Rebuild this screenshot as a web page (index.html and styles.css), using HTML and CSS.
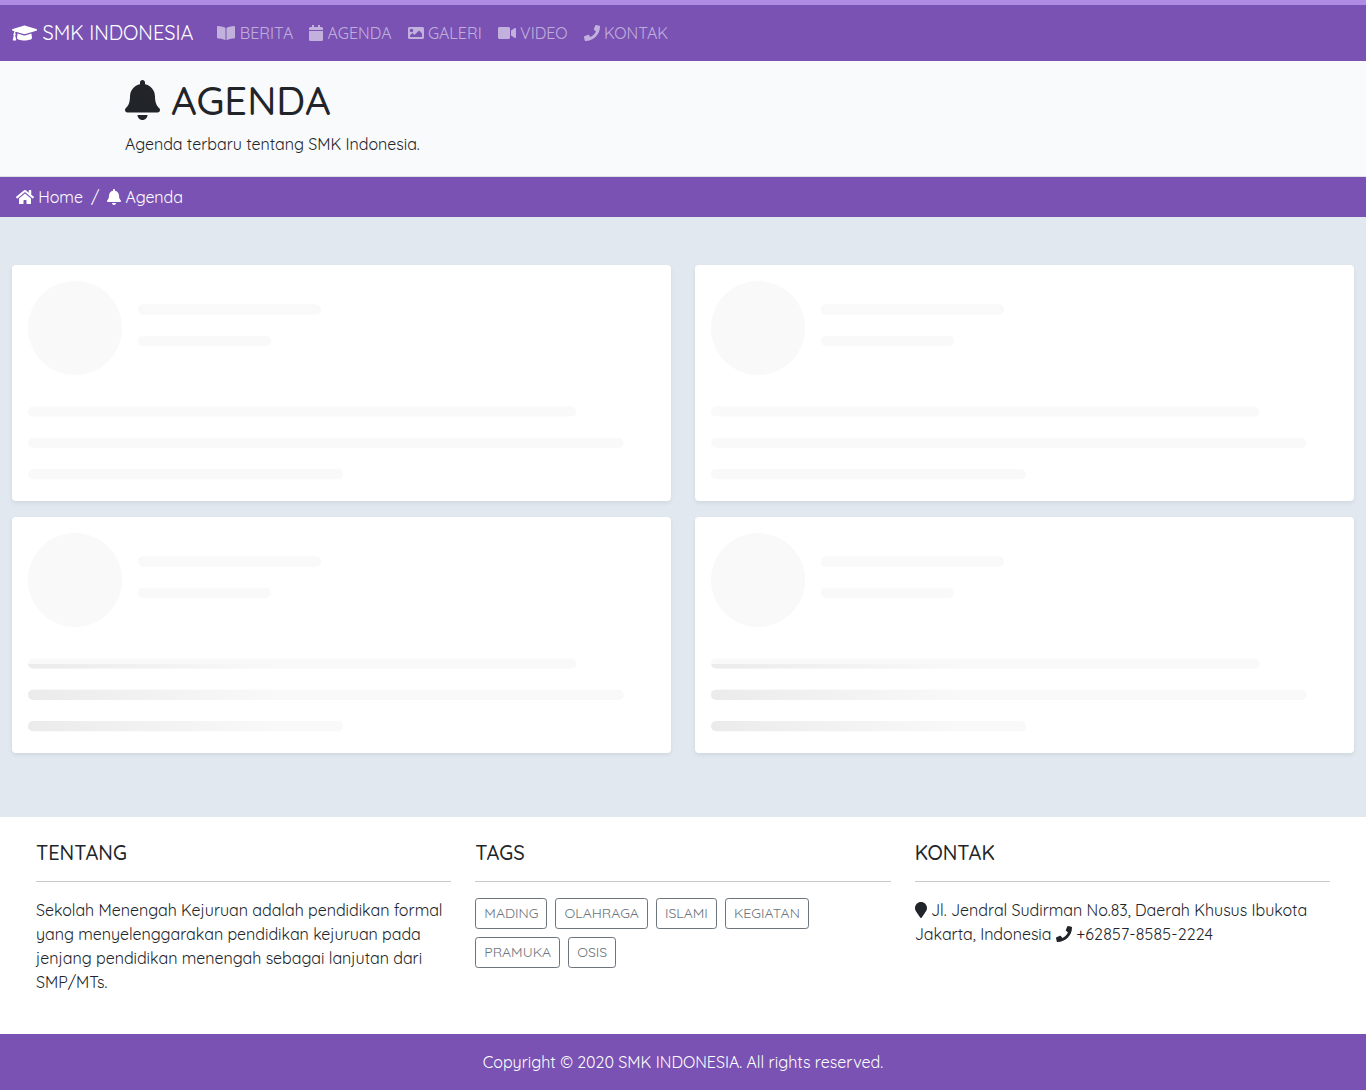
FILE: index.html
```html
<!DOCTYPE html>
<html lang="id">
<head>
<meta charset="utf-8">
<title>Agenda - SMK Indonesia</title>
<link rel="stylesheet" href="styles.css">
</head>
<body>
<svg class="defs" width="0" height="0" aria-hidden="true">
  <defs>
    <symbol id="cap" viewBox="0 0 640 512"><path d="M622.34 153.2L343.4 67.5c-15.2-4.67-31.6-4.67-46.79 0L17.66 153.2c-23.54 7.23-23.54 38.36 0 45.59l48.63 14.94c-10.67 13.19-17.23 29.28-17.88 46.9C38.78 266.15 32 276.11 32 288c0 10.78 5.68 19.85 13.86 25.65L20.33 428.53C18.11 438.52 25.71 448 35.94 448h56.11c10.24 0 17.84-9.48 15.62-19.47L82.14 313.65C90.32 307.85 96 298.78 96 288c0-11.57-6.47-21.25-15.66-26.87.76-15.02 8.44-28.3 20.69-36.72L296.6 284.5c9.06 2.78 26.44 6.25 46.79 0l278.95-85.7c23.55-7.24 23.55-38.36 0-45.6zM352.79 315.09c-28.53 8.76-52.84 3.92-65.59 0l-145.02-44.55L128 384c0 35.35 85.96 64 192 64s192-28.65 192-64l-14.18-113.47-145.03 44.56z"/></symbol>
    <symbol id="book" viewBox="0 0 576 512"><path d="M542.22 32.05c-54.8 3.11-163.72 14.43-230.96 55.59-4.64 2.84-7.27 7.89-7.27 13.17v363.87c0 11.55 12.63 18.85 23.28 13.49 69.18-34.82 169.23-44.32 218.7-46.92 16.89-.89 30.02-14.43 30.02-30.66V62.75c.01-17.71-15.35-31.74-33.77-30.7zM264.73 87.64C197.5 46.48 88.58 35.17 33.78 32.05 15.36 31.01 0 45.04 0 62.75V400.6c0 16.24 13.13 29.78 30.02 30.66 49.49 2.6 149.59 12.11 218.77 46.95 10.62 5.35 23.21-1.94 23.21-13.46V100.63c0-5.29-2.62-10.14-7.27-12.99z"/></symbol>
    <symbol id="calendar" viewBox="0 0 448 512"><path d="M12 192h424c6.6 0 12 5.4 12 12v260c0 26.5-21.5 48-48 48H48c-26.5 0-48-21.5-48-48V204c0-6.6 5.4-12 12-12zm436-44v-36c0-26.5-21.5-48-48-48h-48V12c0-6.6-5.4-12-12-12h-40c-6.6 0-12 5.4-12 12v52H160V12c0-6.6-5.4-12-12-12h-40c-6.6 0-12 5.4-12 12v52H48C21.5 64 0 85.5 0 112v36c0 6.6 5.4 12 12 12h424c6.6 0 12-5.4 12-12z"/></symbol>
    <symbol id="image" viewBox="0 0 512 512"><path fill-rule="evenodd" d="M464 448H48c-26.51 0-48-21.49-48-48V112c0-26.51 21.49-48 48-48h416c26.51 0 48 21.49 48 48v288c0 26.51-21.49 48-48 48zM112 120c-30.928 0-56 25.072-56 56s25.072 56 56 56 56-25.072 56-56-25.072-56-56-56zM64 384h384V272l-87.515-87.515c-4.686-4.686-12.284-4.686-16.971 0L208 320l-55.515-55.515c-4.686-4.686-12.284-4.686-16.971 0L64 336v48z"/></symbol>
    <symbol id="video" viewBox="0 0 576 512"><path d="M336.2 64H47.8C21.4 64 0 85.4 0 111.8v288.4C0 426.6 21.4 448 47.8 448h288.4c26.4 0 47.8-21.4 47.8-47.8V111.8c0-26.4-21.4-47.8-47.8-47.8zm189.4 37.7L416 177.3v157.4l109.6 75.5c21.2 14.6 50.4-.3 50.4-25.8V127.5c0-25.4-29.1-40.4-50.4-25.8z"/></symbol>
    <symbol id="phone" viewBox="0 0 512 512"><path d="M493.4 24.6l-104-24c-11.3-2.6-22.9 3.3-27.5 13.9l-48 112c-4.2 9.8-1.4 21.3 6.9 28l60.6 49.6c-36 76.7-98.9 140.5-177.2 177.2l-49.6-60.6c-6.8-8.3-18.2-11.1-28-6.9l-112 48C3.9 366.5-2 378.1.6 389.4l24 104C27.1 504.2 36.7 512 48 512c256.1 0 464-207.5 464-464 0-11.2-7.7-20.9-18.6-23.4z"/></symbol>
    <symbol id="bell" viewBox="0 0 448 512"><path d="M224 512c35.32 0 63.97-28.65 63.97-64H160.03c0 35.35 28.65 64 63.97 64zm215.39-149.71c-19.32-20.76-55.47-51.99-55.47-154.29 0-77.7-54.48-139.9-127.94-155.16V32c0-17.67-14.32-32-31.98-32s-31.98 14.33-31.98 32v20.84C118.56 68.1 64.08 130.3 64.08 208c0 102.3-36.15 133.53-55.47 154.29-6 6.45-8.66 14.16-8.61 21.71.11 16.4 12.98 32 32.1 32h383.8c19.12 0 32-15.6 32.1-32 .05-7.55-2.61-15.27-8.61-21.71z"/></symbol>
    <symbol id="home" viewBox="0 0 576 512"><path d="M280.37 148.26L96 300.11V464a16 16 0 0 0 16 16l112.06-.29a16 16 0 0 0 15.92-16V368a16 16 0 0 1 16-16h64a16 16 0 0 1 16 16v95.64a16 16 0 0 0 16 16.05L464 480a16 16 0 0 0 16-16V300L295.67 148.26a12.19 12.19 0 0 0-15.3 0zM571.6 251.47L488 182.56V44.05a12 12 0 0 0-12-12h-56a12 12 0 0 0-12 12v72.61L318.47 43a48 48 0 0 0-61 0L4.34 251.47a12 12 0 0 0-1.6 16.9l25.5 31A12 12 0 0 0 45.15 301l235.22-193.74a12.19 12.19 0 0 1 15.3 0L530.9 301a12 12 0 0 0 16.9-1.6l25.5-31a12 12 0 0 0-1.7-16.93z"/></symbol>
    <symbol id="marker" viewBox="0 0 384 512"><path d="M172.268 501.67C26.97 291.031 0 269.413 0 192 0 85.961 85.961 0 192 0s192 85.961 192 192c0 77.413-26.97 99.031-172.268 309.67-9.535 13.774-29.93 13.773-39.464 0z"/></symbol>
    <linearGradient id="shimmer" gradientUnits="userSpaceOnUse" x1="0" y1="0" x2="160" y2="0">
      <stop offset="0" stop-color="#ebebeb"/><stop offset="1" stop-color="#f9f9f9"/>
    </linearGradient>
    <clipPath id="swept"><rect x="0" y="83.6" width="400" height="50"/></clipPath>
    <g id="lines">
      <rect x="0" y="80" width="350" height="6.5" rx="3.25"/>
      <rect x="0" y="100" width="380" height="6.5" rx="3.25"/>
      <rect x="0" y="120" width="201" height="6.5" rx="3.25"/>
    </g>
    <g id="skeleton">
      <circle cx="30" cy="30" r="30"/>
      <rect x="70" y="14.8" width="117" height="6.7" rx="3.25"/>
      <rect x="70" y="35" width="85" height="6.5" rx="3.25"/>
      <use href="#lines"/>
    </g>
  </defs>
</svg>

<nav class="navbar">
  <a class="brand"><svg class="icon w20"><use href="#cap"/></svg> SMK INDONESIA</a>
  <a class="nav-link"><svg class="icon w18"><use href="#book"/></svg> BERITA</a>
  <a class="nav-link"><svg class="icon w14"><use href="#calendar"/></svg> AGENDA</a>
  <a class="nav-link"><svg class="icon w16"><use href="#image"/></svg> GALERI</a>
  <a class="nav-link"><svg class="icon w18"><use href="#video"/></svg> VIDEO</a>
  <a class="nav-link"><svg class="icon w16"><use href="#phone"/></svg> KONTAK</a>
</nav>

<header class="page-header">
  <div class="container">
    <h1><svg class="icon w14"><use href="#bell"/></svg> AGENDA</h1>
    <p>Agenda terbaru tentang SMK Indonesia.</p>
  </div>
</header>

<div class="breadcrumb">
  <span><svg class="icon w18"><use href="#home"/></svg> Home</span>
  <span>/</span>
  <span><svg class="icon w14"><use href="#bell"/></svg> Agenda</span>
</div>

<main class="cards">
  <div class="card"><svg class="loader" viewBox="0 0 400 130"><use href="#skeleton"/></svg></div>
  <div class="card"><svg class="loader" viewBox="0 0 400 130"><use href="#skeleton"/></svg></div>
  <div class="card"><svg class="loader" viewBox="0 0 400 130"><use href="#skeleton"/><g fill="url(#shimmer)" clip-path="url(#swept)"><use href="#lines"/></g></svg></div>
  <div class="card"><svg class="loader" viewBox="0 0 400 130"><use href="#skeleton"/><g fill="url(#shimmer)" clip-path="url(#swept)"><use href="#lines"/></g></svg></div>
</main>

<footer>
  <div class="footer-cols">
    <section>
      <h5>TENTANG</h5>
      <hr>
      <p>Sekolah Menengah Kejuruan adalah pendidikan formal yang menyelenggarakan pendidikan kejuruan pada jenjang pendidikan menengah sebagai lanjutan dari SMP/MTs.</p>
    </section>
    <section>
      <h5>TAGS</h5>
      <hr>
      <div class="tags">
        <a class="tag">MADING</a><a class="tag">OLAHRAGA</a><a class="tag">ISLAMI</a><a class="tag">KEGIATAN</a><a class="tag">PRAMUKA</a><a class="tag">OSIS</a>
      </div>
    </section>
    <section>
      <h5>KONTAK</h5>
      <hr>
      <p><svg class="icon w12"><use href="#marker"/></svg> Jl. Jendral Sudirman No.83, Daerah Khusus Ibukota Jakarta, Indonesia <svg class="icon w16"><use href="#phone"/></svg> <span class="phone">+62857-8585-2224</span></p>
    </section>
  </div>
  <div class="copyright">Copyright © 2020 SMK INDONESIA. All rights reserved.</div>
</footer>
</body>
</html>
```
FILE: styles.css
```css
*, *::before, *::after { box-sizing: border-box; }

body {
  margin: 0;
  background: #e2e8f0;
  color: #212529;
  font: 400 16px/1.5 Quicksand, Lato, sans-serif;
}

h1, h5, p { margin: 0; }
p { letter-spacing: -.03px; }

.defs { display: block; height: 0; }

.icon {
  display: inline-block;
  height: 1em;
  vertical-align: -.125em;
  fill: currentColor;
  overflow: visible;
}
.w12 { width: .75em; }
.w14 { width: .875em; }
.w16 { width: 1em; }
.w18 { width: 1.125em; }
.w20 { width: 1.25em; }

/* Top navigation */
.navbar {
  display: flex;
  align-items: center;
  height: 61px;
  padding: 0 12px;
  border-top: 5px solid #b08be3;
  background: #7952b3;
  white-space: nowrap;
}
.brand {
  margin-right: 16px;
  color: #fff;
  font-size: 20px;
  letter-spacing: -.01px;
}
.nav-link {
  padding: 8px;
  color: rgba(255, 255, 255, .55);
}

/* Page title */
.page-header {
  height: 116px;
  padding-top: 15px;
  border-bottom: 1px solid #dee2e6;
  background: #f8fafc;
}
.container {
  max-width: 1140px;
  margin: 0 auto;
  padding: 0 12px;
}
h1 {
  margin-bottom: 8px;
  font-size: 40px;
  font-weight: 500;
  line-height: 1.2;
}

.breadcrumb {
  display: flex;
  gap: 8px;
  padding: 8px 16px;
  background: #7952b3;
  color: #fff;
  letter-spacing: -.06px;
}

/* Loading cards */
.cards {
  display: grid;
  grid-template-columns: 1fr 1fr;
  gap: 16px 24px;
  padding: 48px 12px 64px;
}
.card {
  height: 236px;
  padding: 16px;
  border-radius: 4px;
  background: #fff;
  box-shadow: 0 2px 4px rgba(0, 0, 0, .075);
}
.loader {
  display: block;
  width: 100%;
  fill: #f9f9f9;
}

/* Footer */
footer { background: #fff; }
.footer-cols {
  display: grid;
  grid-template-columns: repeat(3, 1fr);
  gap: 24px;
  height: 217px;
  padding: 24px 36px 0;
}
h5 {
  font-size: 20px;
  font-weight: 500;
  line-height: 1.2;
}
hr {
  height: 1px;
  margin: 16px 0;
  border: 0;
  background: #212529;
  opacity: .25;
}
.tags {
  display: flex;
  flex-wrap: wrap;
  gap: 8px;
}
.tag {
  padding: 4px 8px;
  border: 1px solid #6c757d;
  border-radius: 3.2px;
  color: #6c757d;
  font-size: 14px;
}
.phone { letter-spacing: .19px; }
.copyright {
  padding: 16px;
  background: #7952b3;
  color: #fff;
  text-align: center;
}
```
